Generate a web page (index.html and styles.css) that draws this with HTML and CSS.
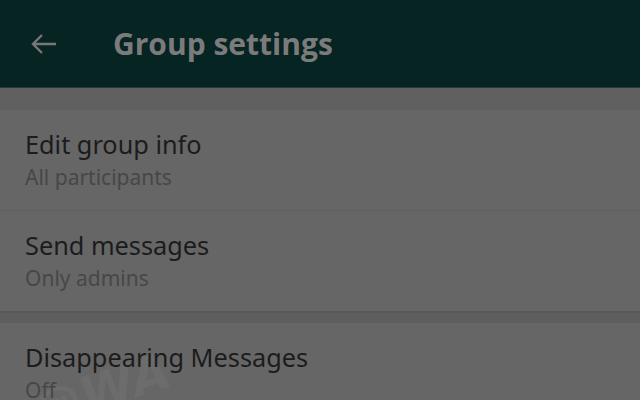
FILE: index.html
```html
<!DOCTYPE html>
<html>
  <head>
    <link rel="stylesheet" href="styles.css">
  </head>
  <body>
    <div class="toolbar">
      <svg class="back" width="26" height="22" viewBox="0 0 26 22">
        <path d="M25 11H2M11 2L2 11l9 9" fill="none" stroke="#777" stroke-width="2.4"/>
      </svg>
      <div class="title">Group settings</div>
    </div>
    <div class="gap"></div>

    <div class="section">
      <div class="item">
        <div class="primary">Edit group info</div>
        <div class="secondary">All participants</div>
      </div>
      <div class="item">
        <div class="primary">Send messages</div>
        <div class="secondary">Only admins</div>
      </div>
    </div>

    <div class="section-break"></div>

    <div class="section">
      <div class="item">
        <div class="primary">Disappearing Messages</div>
        <div class="secondary">Off</div>
      </div>
    </div>

    <div class="watermark">@WA</div>
  </body>
</html>
```

FILE: styles.css
```css
html {
  overflow: hidden;
}
body {
  margin: 0;
  font-family: "Noto Sans", sans-serif;
  background: #666;
  height: 400px;
  overflow: hidden;
  position: relative;
}
.toolbar {
  height: 87px;
  background: #062422;
  display: flex;
  align-items: center;
  border-bottom: 1px solid #2a3a3a;
}
.back {
  margin-left: 31px;
  margin-right: 56px;
}
.title {
  font-family: "Open Sans", sans-serif;
  font-weight: 700;
  font-size: 30px;
  color: #7b7b7b;
  margin-top: -1px;
}
.gap {
  height: 22px;
  background: #606060;
}
.item {
  padding: 17px 25px 0;
  height: 83px;
  border-bottom: 1px solid #5f5f5f;
}
.section .item:last-child {
  border-bottom: none;
}
.primary {
  font-size: 25.3px;
  line-height: 35px;
  color: #1c1c1c;
}
.secondary {
  font-size: 21px;
  line-height: 30px;
  color: #474747;
}
.section-break {
  height: 10px;
  background: #5e5e5e;
  border-top: 2px solid #585858;
}
.watermark {
  position: absolute;
  left: 30px;
  top: 362px;
  font-family: "DejaVu Sans", sans-serif;
  font-weight: 700;
  font-style: italic;
  font-size: 50px;
  color: #6c6c6c;
  transform: rotate(-18deg);
  z-index: -1;
}
```
